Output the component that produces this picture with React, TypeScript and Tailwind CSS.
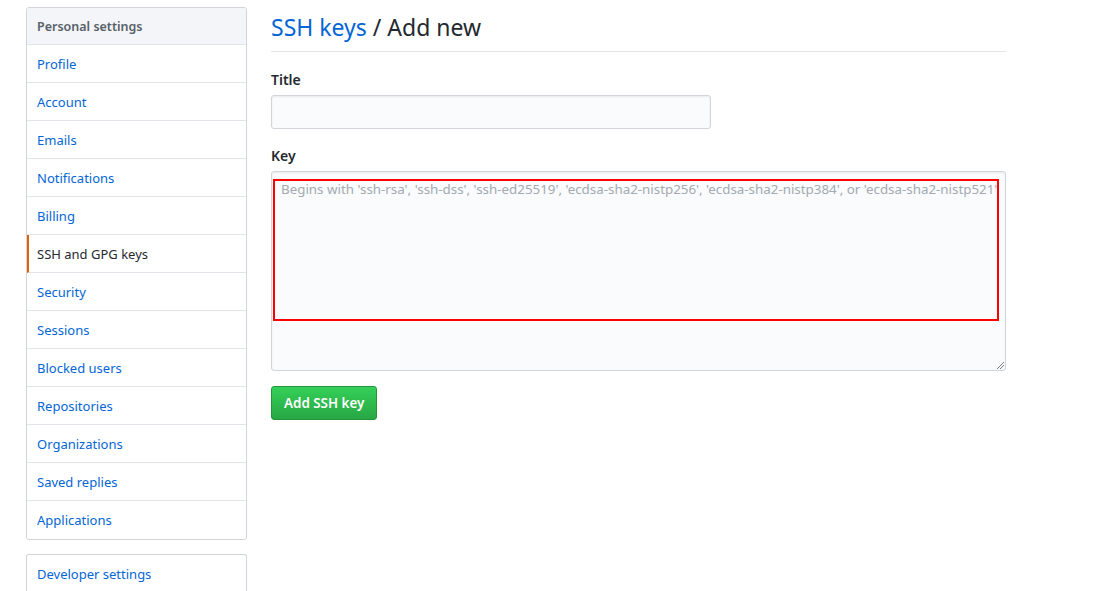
import React from "react";

const items = [
  "Profile",
  "Account",
  "Emails",
  "Notifications",
  "Billing",
  "SSH and GPG keys",
  "Security",
  "Sessions",
  "Blocked users",
  "Repositories",
  "Organizations",
  "Saved replies",
  "Applications",
];

export default function App() {
  const font = { fontFamily: '"Segoe UI", "Noto Sans", "Open Sans", sans-serif' };
  return (
    <div className="min-h-[591px] w-[1106px] bg-white text-[#24292e]" style={font}>
      <div className="flex gap-[24px] pl-[26px] pt-[7px]">
        <div className="w-[221px] shrink-0">
          <div className="rounded-[3px] border border-[#d1d5da] overflow-hidden">
            <div className="h-[37px] flex items-center pt-[2px] px-[10px] bg-[#f3f5f8] text-[12.5px] font-semibold text-[#586069] border-b border-[#e1e4e8]">
              Personal settings
            </div>
            {items.map((it, i) => {
              const active = it === "SSH and GPG keys";
              return (
                <div
                  key={it}
                  className={
                    "h-[38px] flex items-center pt-[2px] text-[13px] " +
                    (i < items.length - 1 ? "border-b border-[#e1e4e8] " : "") +
                    (active
                      ? "border-l-2 border-l-[#e36209] pl-[8px] text-[13.4px] text-[#24292e]"
                      : "pl-[10px] text-[#0366d6]")
                  }
                >
                  {it}
                </div>
              );
            })}
          </div>
          <div className="mt-[14px] rounded-t-[3px] border border-b-0 border-[#d1d5da] h-[40px] flex items-center px-[10px] text-[13px] text-[#0366d6]">
            Developer settings
          </div>
        </div>
        <div className="w-[735px]">
          <div className="h-[45px] border-b border-[#e1e4e8] flex items-start">
            <h1 className="text-[23px] leading-[40px] font-normal">
              <span className="text-[#0366d6]">SSH keys</span> / Add new
            </h1>
          </div>
          <div className="mt-[18px] text-[14px] font-semibold leading-[20px]">Title</div>
          <div className="mt-[5px] w-[440px] h-[34px] rounded-[3px] border border-[#d1d5da] bg-[#fafbfc] shadow-[inset_0_1px_2px_rgba(27,31,35,0.075)]" />
          <div className="mt-[17px] text-[14px] font-semibold leading-[20px]">Key</div>
          <div className="mt-[5px] relative w-[735px] h-[200px] rounded-[3px] border border-[#d1d5da] bg-[#fafbfc] shadow-[inset_0_1px_2px_rgba(27,31,35,0.075)]">
            <div className="absolute left-[1px] top-[7px] w-[726px] h-[142px] border-2 border-[#ff0000]" />
            <div className="pl-[9px] pt-[7px] text-[13.35px] leading-[20px] text-[#a3aab1] whitespace-nowrap">
              Begins with 'ssh-rsa', 'ssh-dss', 'ssh-ed25519', 'ecdsa-sha2-nistp256', 'ecdsa-sha2-nistp384', or 'ecdsa-sha2-nistp521'
            </div>
            <svg className="absolute right-[1px] bottom-[1px]" width="8" height="8" viewBox="0 0 8 8">
              <line x1="1" y1="8" x2="8" y2="1" stroke="#555" strokeWidth="0.8" />
              <line x1="4" y1="8" x2="8" y2="4" stroke="#555" strokeWidth="0.8" />
            </svg>
          </div>
          <button className="mt-[15px] h-[34px] px-[12px] rounded-[3px] border border-[#23963d] bg-gradient-to-b from-[#34d058] to-[#28a745] text-white text-[13.4px] font-semibold">
            Add SSH key
          </button>
        </div>
      </div>
    </div>
  );
}
